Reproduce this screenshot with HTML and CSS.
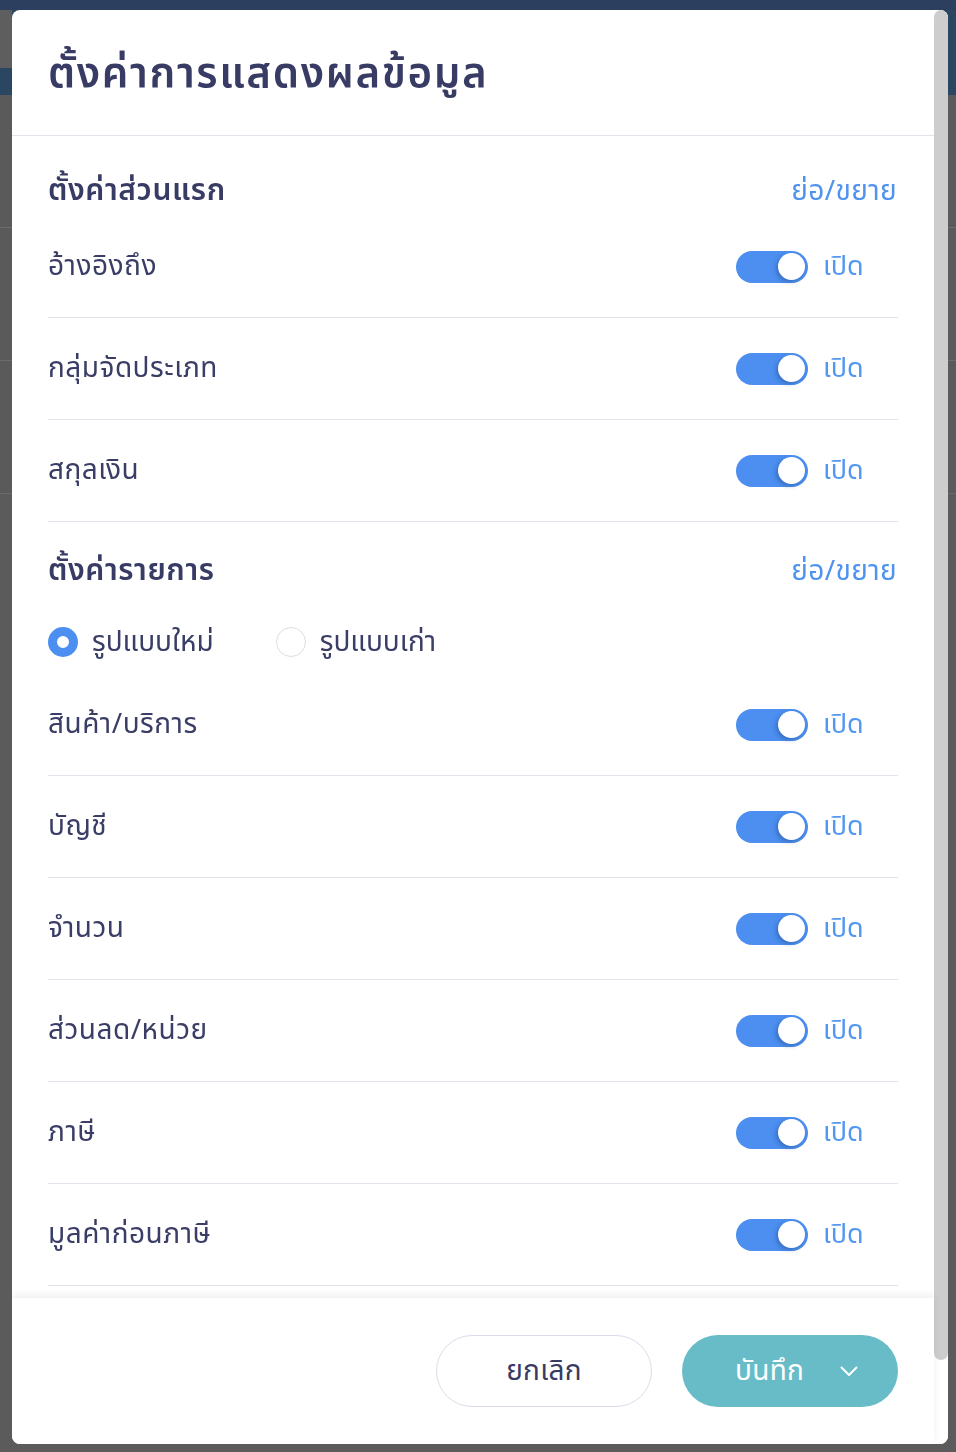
FILE: index.html
```html
<!DOCTYPE html>
<html lang="th">
<head>
<meta charset="utf-8">
<title>ตั้งค่าการแสดงผลข้อมูล</title>
<link rel="stylesheet" href="styles.css">
</head>
<body>
<div class="page">
  <div class="page-top"></div>
  <div class="page-band"><div class="band-left"></div></div>
  <div class="page-row"></div>
  <div class="page-row"></div>
  <div class="page-row"></div>
</div>

<div class="modal">
  <div class="modal-main">
    <div class="modal-header">
      <h1 class="modal-title">ตั้งค่าการแสดงผลข้อมูล</h1>
    </div>
    <div class="modal-body">
      <div class="section">
        <div class="section-head">
          <h2 class="section-title">ตั้งค่าส่วนแรก</h2>
          <span class="link">ย่อ/ขยาย</span>
        </div>
        <div class="row"><span class="label">อ้างอิงถึง</span><span class="switch-group"><span class="switch"><span class="knob"></span></span><span class="state">เปิด</span></span></div>
        <div class="row"><span class="label">กลุ่มจัดประเภท</span><span class="switch-group"><span class="switch"><span class="knob"></span></span><span class="state">เปิด</span></span></div>
        <div class="row"><span class="label">สกุลเงิน</span><span class="switch-group"><span class="switch"><span class="knob"></span></span><span class="state">เปิด</span></span></div>
      </div>
      <div class="section section-second">
        <div class="section-head">
          <h2 class="section-title">ตั้งค่ารายการ</h2>
          <span class="link">ย่อ/ขยาย</span>
        </div>
        <div class="radio-row">
          <span class="radio-item"><span class="radio radio-on"></span><span class="radio-label">รูปแบบใหม่</span></span>
          <span class="radio-item"><span class="radio"></span><span class="radio-label">รูปแบบเก่า</span></span>
        </div>
        <div class="row"><span class="label">สินค้า/บริการ</span><span class="switch-group"><span class="switch"><span class="knob"></span></span><span class="state">เปิด</span></span></div>
        <div class="row"><span class="label">บัญชี</span><span class="switch-group"><span class="switch"><span class="knob"></span></span><span class="state">เปิด</span></span></div>
        <div class="row"><span class="label">จำนวน</span><span class="switch-group"><span class="switch"><span class="knob"></span></span><span class="state">เปิด</span></span></div>
        <div class="row"><span class="label">ส่วนลด/หน่วย</span><span class="switch-group"><span class="switch"><span class="knob"></span></span><span class="state">เปิด</span></span></div>
        <div class="row"><span class="label">ภาษี</span><span class="switch-group"><span class="switch"><span class="knob"></span></span><span class="state">เปิด</span></span></div>
        <div class="row"><span class="label">มูลค่าก่อนภาษี</span><span class="switch-group"><span class="switch"><span class="knob"></span></span><span class="state">เปิด</span></span></div>
      </div>
    </div>
    <div class="modal-footer">
      <button class="btn btn-cancel" type="button">ยกเลิก</button>
      <button class="btn btn-save" type="button"><span class="btn-save-text">บันทึก</span><svg class="chevron" width="18" height="11" viewBox="0 0 18 11"><path d="M1.5 1.5 L9 9 L16.5 1.5" fill="none" stroke="#ffffff" stroke-width="2" stroke-linecap="round" stroke-linejoin="round"/></svg></button>
    </div>
  </div>
  <div class="scrollbar"><div class="scroll-thumb"></div></div>
</div>
</body>
</html>
```

FILE: styles.css
```css
* { box-sizing: border-box; }

html, body {
  margin: 0;
  padding: 0;
}

body {
  width: 956px;
  height: 1452px;
  overflow: hidden;
  background: #5b5b5b;
  font-family: "Noto Sans Thai", "Noto Sans Thai UI", "Noto Sans", "DejaVu Sans", sans-serif;
}

/* dimmed page behind the modal */
.page {
  height: 1452px;
  display: flex;
  flex-direction: column;
}
.page-top {
  height: 10px;
  background: #2c3f5e;
}
.page-band {
  height: 85px;
  background: #2a4660;
  display: flex;
}
.band-left {
  width: 12px;
  height: 58px;
  background: #5e5e5e;
}
.page-row {
  height: 133px;
  border-bottom: 1px solid #6a6a6a;
  background: #5a5a5a;
}

/* modal */
.modal {
  position: fixed;
  left: 12px;
  top: 10px;
  width: 936px;
  height: 1434px;
  background: #ffffff;
  border-radius: 8px;
  display: flex;
  overflow: hidden;
}

.modal-main {
  flex: 1;
  min-width: 0;
  display: flex;
  flex-direction: column;
}

.modal-header {
  height: 126px;
  flex: none;
  padding: 0 36px;
  display: flex;
  align-items: center;
  border-bottom: 1px solid #e2e2ea;
}

.modal-title {
  margin: 0;
  margin-top: 4px;
  font-size: 42px;
  letter-spacing: 1.6px;
  font-weight: 600;
  color: #383b63;
  line-height: 1.2;
}

.modal-body {
  flex: 1;
  min-height: 0;
  overflow: hidden;
  padding: 0 36px;
}

.section-head {
  height: 50px;
  margin-top: 30px;
  display: flex;
  align-items: center;
  justify-content: space-between;
}
.section-second .section-head {
  margin-top: 24px;
}

.section-title {
  margin: 0;
  font-size: 30px;
  letter-spacing: 0.6px;
  font-weight: 600;
  color: #383b63;
}

.link {
  font-size: 28px;
  letter-spacing: 0.4px;
  color: #4f93ef;
  margin-right: 1px;
}

.row {
  height: 102px;
  display: flex;
  align-items: center;
  justify-content: space-between;
  border-bottom: 1px solid #e2e2ea;
}

.label {
  font-size: 28px;
  letter-spacing: 0.5px;
  color: #3a3d65;
}

.switch-group {
  display: flex;
  align-items: center;
  gap: 15px;
  width: 162px;
}

.switch {
  width: 72px;
  height: 32px;
  border-radius: 16px;
  background: #4c8ff0;
  display: flex;
  align-items: center;
  justify-content: flex-end;
  padding-right: 3px;
}

.knob {
  width: 27px;
  height: 27px;
  border-radius: 50%;
  background: #ffffff;
  box-shadow: -2px 2px 4px rgba(20, 50, 110, 0.35);
}

.state {
  font-size: 27px;
  color: #5297f1;
}

.radio-row {
  height: 32px;
  margin: 30px 0 16px;
  display: flex;
  align-items: center;
  gap: 62px;
}

.radio-item {
  display: flex;
  align-items: center;
  gap: 14px;
}

.radio {
  width: 30px;
  height: 30px;
  border-radius: 50%;
  border: 1px solid #dcdce6;
  background: #ffffff;
}
.radio-on {
  border: 9px solid #4c8ff0;
}

.radio-label {
  font-size: 28px;
  color: #3a3d65;
}

.modal-footer {
  height: 146px;
  flex: none;
  position: relative;
  background: #ffffff;
  box-shadow: 0 -3px 8px rgba(0, 0, 0, 0.07);
  display: flex;
  align-items: center;
  justify-content: flex-end;
  gap: 30px;
  padding-right: 36px;
}

.btn {
  width: 216px;
  height: 72px;
  border-radius: 36px;
  font-family: inherit;
  font-size: 28px;
  letter-spacing: 0.3px;
  cursor: pointer;
  display: flex;
  align-items: center;
  justify-content: center;
}

.btn-cancel {
  background: #ffffff;
  border: 1px solid #dcdce8;
  color: #383b63;
}

.btn-save {
  background: #67bcc8;
  border: none;
  color: #ffffff;
  justify-content: flex-start;
  padding-left: 53px;
}
.btn-save-text {
  flex: 1;
  text-align: left;
}
.chevron {
  margin-right: 34px;
}

.scrollbar {
  width: 14px;
  flex: none;
  background: #ffffff;
}
.scroll-thumb {
  height: 1350px;
  border-radius: 7px;
  background: #cdcdcd;
}
```
